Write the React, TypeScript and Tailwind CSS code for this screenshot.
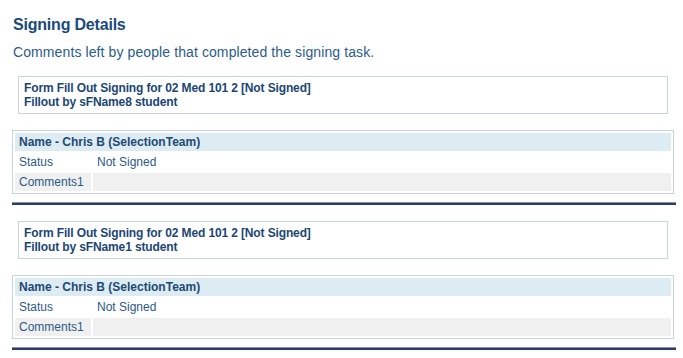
import React from "react";

const font = { fontFamily: '"Liberation Sans", Arial, sans-serif' };

function Block({ student }: { student: string }) {
  return (
    <div>
      <div className="ml-[18px] w-[650px] border border-[#c5d4dd] px-[5px] pt-[4px] pb-[4px] text-[12px] font-bold leading-[14px] tracking-[-0.13px] text-[#1b4675]">
        <div>Form Fill Out Signing for 02 Med 101 2 [Not Signed]</div>
        <div>Fillout by {student} student</div>
      </div>
      <div className="ml-[12px] mt-[16px] flex w-[662px] flex-col gap-[2px] border border-[#c5d4dd] p-[2px] text-[12px] leading-[18px]">
        <div className="h-[18px] bg-[#ddebf2] px-[4px] font-bold text-[#1d4a75]">
          Name - Chris B (SelectionTeam)
        </div>
        <div className="flex h-[18px] gap-[2px] text-[#2c5a88]">
          <div className="w-[76px] px-[4px]">Status</div>
          <div className="flex-1 px-[4px]">Not Signed</div>
        </div>
        <div className="flex h-[18px] gap-[2px] text-[#2c5a88]">
          <div className="w-[76px] bg-[#f0f0f0] px-[4px]">Comments1</div>
          <div className="flex-1 bg-[#f0f0f0] px-[4px]"></div>
        </div>
      </div>
      <div className="ml-[12px] mt-[8px] w-[664px] border-t border-[#8a9099] h-[3px] bg-[#263e68]"></div>
    </div>
  );
}

export default function App() {
  return (
    <div className="h-[358px] w-[683px] bg-white" style={font}>
      <div className="pl-[13px] pt-[15px] text-[16px] font-bold leading-[20px] tracking-[-0.2px] text-[#1a4a7a]">
        Signing Details
      </div>
      <div className="mt-[9px] pl-[13px] text-[14px] leading-[16px] tracking-[0.1px] text-[#2b5c8a]">
        Comments left by people that completed the signing task.
      </div>
      <div className="mt-[16px] flex flex-col gap-[16px]">
        <Block student="sFName8" />
        <Block student="sFName1" />
      </div>
    </div>
  );
}
